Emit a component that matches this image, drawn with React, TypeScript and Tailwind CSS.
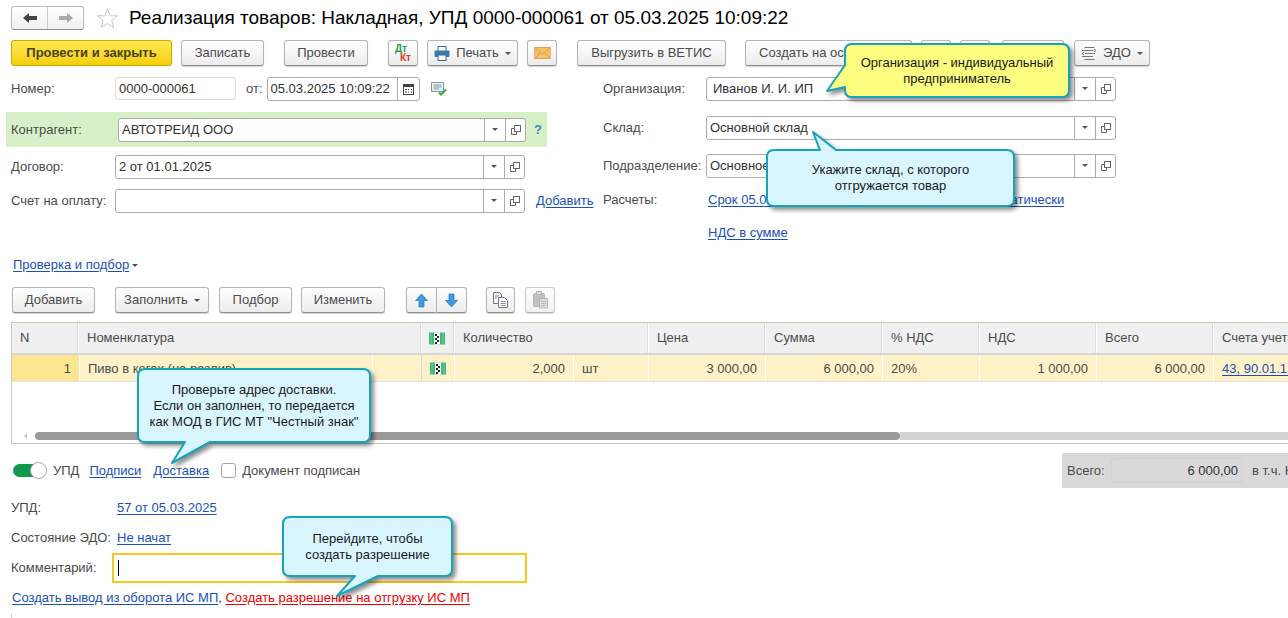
import type { ReactNode } from "react";

const Caret = () => <span className="inline-block w-0 h-0 border-x-[3px] border-x-transparent border-t-[3px] border-t-[#555]" />;

const Btn = ({ className = "", children }: { className?: string; children: ReactNode }) => (
  <div className={`h-[26px] flex items-center justify-center shrink-0 rounded-[3px] border border-[#b5b5b5] border-b-[#8f8f8f] bg-gradient-to-b from-white to-[#ececec] shadow-[0_1px_1px_rgba(0,0,0,0.18)] ${className}`}>
    {children}
  </div>
);

const A = ({ className = "", children }: { className?: string; children: ReactNode }) => (
  <span className={`text-[#1a50b8] underline underline-offset-2 whitespace-nowrap ${className}`}>{children}</span>
);

const OpenIcon = () => (
  <svg width="10" height="10" viewBox="0 0 10 10" fill="none" stroke="#666">
    <rect x="3.500" y="0.500" width="6" height="6" fill="white" />
    <path d="M3.500 3.500H0.500V9.500H5.500V6.500" />
  </svg>
);

const Field = ({ className = "", text = "", textClass = "pl-[3px]" }: { className?: string; text?: string; textClass?: string }) => (
  <div className={`h-[24px] flex shrink-0 rounded-[3px] border border-[#ababab] bg-white ${className}`}>
    <div className={`flex-1 leading-[22px] text-[#333] whitespace-nowrap overflow-hidden ${textClass}`}>{text}</div>
    <div className="w-[21px] border-l border-[#ababab] flex items-center justify-center"><Caret /></div>
    <div className="w-[20px] border-l border-[#ababab] flex items-center justify-center"><OpenIcon /></div>
  </div>
);

const Callout = ({ className, path, fill, children }: { className: string; path: string; fill: string; children: ReactNode }) => (
  <div className={`absolute flex items-center justify-center text-center leading-[16px] text-[#1a1a1a] ${className}`}>
    <svg className="absolute inset-0 w-full h-full overflow-visible drop-shadow-[3px_3px_2px_rgba(0,0,0,0.45)]">
      <path d={path} fill={fill} stroke="#16a3bd" strokeWidth="2" strokeLinejoin="round" />
    </svg>
    <div className="relative">{children}</div>
  </div>
);

const Mark = () => (
  <svg width="16" height="13" viewBox="0 0 16 13">
    <rect x="0" y="0.500" width="16" height="12" fill="#3cb878" />
    <path d="M2 0.500v12M14 0.500v12" stroke="#a5e8c0" strokeDasharray="1 1" />
    <rect x="5" y="0.500" width="6" height="12" fill="white" />
    <path d="M6 2h2v2H6zM8 4h2v2H8zM6 6h2v2H6zM8 8h2v2H8zM6 10h2v2H6z" fill="#222" />
  </svg>
);

const Arrow = ({ up }: { up?: boolean }) => (
  <svg width="13" height="15" viewBox="0 0 13 15" className={up ? "" : "rotate-180"}>
    <path d="M6.500 1L12.500 7.500H9V14H4V7.500H0.500Z" fill="#3f9be0" stroke="#1f78bf" strokeWidth="0.700" />
  </svg>
);

const CopyIcon = () => (
  <svg width="17" height="18" viewBox="0 0 17 18" fill="#f4f4f4" stroke="#6d7a86">
    <path d="M1.500 1.500H7.500L9.500 3.500V12.500H1.500Z" />
    <path d="M3 5H7M3 7H5" strokeWidth="0.800" />
    <path d="M6.500 6.500H12.500L15.500 9.500V16.500H6.500Z" fill="white" />
    <path d="M8.500 10.500H13.500M8.500 12.500H13.500M8.500 14.500H13.500" strokeWidth="0.800" />
  </svg>
);

const PasteIcon = () => (
  <svg width="17" height="18" viewBox="0 0 17 18" fill="#a8a8a8" stroke="#9a9a9a">
    <rect x="1.500" y="2.500" width="11" height="13" rx="1" />
    <rect x="4.500" y="0.500" width="5" height="3" fill="#d0d0d0" />
    <path d="M7.500 7.500H15.500V17H7.500Z" fill="#cfcfcf" />
    <path d="M9 10.500H14M9 12.500H14M9 14.500H14" strokeWidth="0.800" />
  </svg>
);

const HeadCell = ({ className, children }: { className: string; children?: ReactNode }) => (
  <div className={`shrink-0 h-full flex items-center pl-[8px] bg-[#f0f0f0] border-r border-r-[#dcdcdc] mr-px whitespace-nowrap ${className}`}>{children}</div>
);

const RowCell = ({ className, children }: { className: string; children?: ReactNode }) => (
  <div className={`shrink-0 h-full flex items-center px-[8px] pt-px bg-[#fff2c9] mr-px whitespace-nowrap ${className}`}>{children}</div>
);

export default function App() {
  return (
    <div className="relative w-[1288px] h-[618px] overflow-hidden bg-white text-[13px] leading-[14px] text-[#4b4b4b] font-['Liberation_Sans',Arial,sans-serif]">
      {/* header */}
      <div className="flex items-center h-[24px] mt-[6px] ml-[11px]">
        <div className="flex w-[73px] h-[24px] rounded-[3px] border border-[#bdbdbd] border-b-[#8f8f8f] bg-gradient-to-b from-white to-[#f0f0f0]">
          <div className="w-[36px] flex items-center justify-center border-r border-[#c9c9c9]">
            <svg width="14" height="10" viewBox="0 0 14 10"><path d="M0 5L6 0V3H14V7H6V10Z" fill="#444" /></svg>
          </div>
          <div className="flex-1 flex items-center justify-center">
            <svg width="14" height="10" viewBox="0 0 14 10"><path d="M14 5L8 0V3H0V7H8V10Z" fill="#a8a8a8" /></svg>
          </div>
        </div>
        <svg className="ml-[12px]" width="23" height="23" viewBox="0 0 24 24" fill="none" stroke="#c4c4c4"><path d="M12 2L14.800 9.200H22.500L16.400 14L18.600 21.500L12 17.200L5.400 21.500L7.600 14L1.500 9.200H9.200Z" /></svg>
        <div className="ml-[10px] text-[19px] leading-[24px] text-black whitespace-nowrap">Реализация товаров: Накладная, УПД 0000-000061 от 05.03.2025 10:09:22</div>
      </div>

      {/* main toolbar */}
      <div className="flex items-center mt-[10px] ml-[11px]">
        <div className="w-[161px] h-[26px] flex items-center justify-center rounded-[3px] border border-[#c9a800] bg-gradient-to-b from-[#ffe84d] to-[#f5cf00] font-bold text-[#4a4210]">Провести и закрыть</div>
        <Btn className="w-[83px] ml-[9px]">Записать</Btn>
        <Btn className="w-[84px] ml-[20px]">Провести</Btn>
        <Btn className="w-[30px] ml-[20px]">
          <div className="text-[10px] leading-[9px] font-bold">
            <div className="text-[#1e9e4a]">Дт</div>
            <div className="text-[#e8352a] ml-[5px]">Кт</div>
          </div>
        </Btn>
        <Btn className="w-[91px] ml-[9px] gap-[6px]">
          <svg width="16" height="15" viewBox="0 0 16 15">
            <rect x="4" y="0.500" width="8" height="5" fill="white" stroke="#3a6a94" />
            <rect x="0.500" y="4.500" width="15" height="6.500" rx="1" fill="#3a7bb0" />
            <rect x="4" y="9" width="8" height="5.500" fill="white" stroke="#3a6a94" />
          </svg>
          <span>Печать</span>
          <Caret />
        </Btn>
        <Btn className="w-[30px] ml-[9px]">
          <svg width="17" height="12" viewBox="0 0 19 14">
            <rect x="0.500" y="0.500" width="18" height="13" fill="#f5c26b" stroke="#d99a3c" />
            <path d="M1 1L9.500 8L18 1M1 13L7 6M18 13L12 6" fill="none" stroke="#d99a3c" />
          </svg>
        </Btn>
        <Btn className="w-[149px] ml-[20px]">Выгрузить в ВЕТИС</Btn>
        <Btn className="w-[167px] ml-[19px] justify-start pl-[13px]">Создать на основании</Btn>
        <Btn className="w-[30px] ml-[9px]"> </Btn>
        <Btn className="w-[30px] ml-[9px]"> </Btn>
        <Btn className="w-[62px] ml-[12px]"> </Btn>
        <Btn className="w-[76px] ml-[10px] gap-[6px]">
          <svg width="16" height="15" viewBox="0 0 16 15" fill="none" stroke="#777">
            <path d="M3.500 1.500H13.500M1 4.500H12.500M4 7.500H14M1 10.500H12M3.500 13.500H13.500" />
            <path d="M13 3L15 4.500L13 6M3 9L1 7.500L3 6" />
          </svg>
          <span>ЭДО</span>
          <Caret />
        </Btn>
      </div>

      {/* form */}
      <div className="flex mt-[11px] h-[162px]">
        <div className="w-[603px] shrink-0">
          <div className="flex items-center h-[23px]">
            <span className="ml-[11px] w-[104px]">Номер:</span>
            <div className="w-[121px] h-[23px] rounded-[3px] border border-[#dcdcdc] pl-[3px] leading-[21px] text-[#333]">0000-000061</div>
            <span className="ml-[10px]">от:</span>
            <div className="ml-[4px] w-[153px] h-[24px] flex rounded-[3px] border border-[#ababab]">
              <div className="flex-1 pl-[3px] leading-[22px] text-[#333] whitespace-nowrap">05.03.2025 10:09:22</div>
              <div className="w-[22px] border-l border-[#ababab] flex items-center justify-center">
                <svg width="11" height="12" viewBox="0 0 11 12"><rect x="0.500" y="1.500" width="10" height="10" fill="white" stroke="#444" /><rect x="0" y="1" width="11" height="3" fill="#444" /><path d="M2 6h2v1H2zM5 6h1v1H5zM8 6h1v1H8zM2 8.500h2v1H2zM5 8.500h1v1H5zM8 8.500h1v1H8z" fill="#444" /></svg>
              </div>
            </div>
            <svg className="ml-[11px]" width="16" height="14" viewBox="0 0 16 14" fill="none">
              <path d="M0.500 0.500H12.500V9.500H0.500Z" fill="#eef3f6" stroke="#7d97a8" />
              <path d="M2.500 3H10.500M2.500 5H10.500M2.500 7H8" stroke="#7d97a8" />
              <path d="M8 10.500L10 12.500L15 7.500" stroke="#2eae3e" strokeWidth="2" />
            </svg>
          </div>
          <div className="flex items-center ml-[6px] mt-[12px] w-[541px] h-[35px] bg-[#d8f0c8]">
            <span className="ml-[5px] w-[107px]">Контрагент:</span>
            <Field className="w-[408px]" text="АВТОТРЕИД ООО" />
            <span className="ml-[8px] font-bold text-[#1e8fc8]">?</span>
          </div>
          <div className="flex items-center mt-[8px] h-[23px]">
            <span className="ml-[11px] w-[104px]">Договор:</span>
            <Field className="w-[410px]" text="2 от 01.01.2025" />
          </div>
          <div className="flex items-center mt-[11px] h-[23px]">
            <span className="ml-[11px] w-[104px]">Счет на оплату:</span>
            <Field className="w-[410px]" />
            <A className="ml-[11px]">Добавить</A>
          </div>
        </div>
        <div className="flex-1">
          <div className="flex items-center h-[23px]">
            <span className="w-[103px]">Организация:</span>
            <Field className="w-[410px]" text="Иванов И. И. ИП" textClass="pl-[6px]" />
          </div>
          <div className="flex items-center h-[23px] mt-[16px]">
            <span className="w-[103px]">Склад:</span>
            <Field className="w-[410px]" text="Основной склад" />
          </div>
          <div className="flex items-center h-[23px] mt-[15px]">
            <span className="w-[103px]">Подразделение:</span>
            <Field className="w-[410px]" text="Основное подразделение" />
          </div>
          <div className="flex items-center h-[16px] mt-[15px]">
            <span className="w-[105px]">Расчеты:</span>
            <A>Срок 05.03.2025, 62.01, 62.02, зачет аванса автоматически</A>
          </div>
          <div className="ml-[105px] mt-[18px] h-[16px]">
            <A>НДС в сумме</A>
          </div>
        </div>
      </div>

      <div className="flex items-center ml-[13px] mt-[18px] h-[16px] gap-[3px]">
        <A>Проверка и подбор</A>
        <Caret />
      </div>

      {/* table toolbar */}
      <div className="flex items-center ml-[12px] mt-[14px]">
        <Btn className="w-[83px]">Добавить</Btn>
        <Btn className="w-[94px] ml-[20px] gap-[6px]"><span>Заполнить</span><Caret /></Btn>
        <Btn className="w-[73px] ml-[10px]">Подбор</Btn>
        <Btn className="w-[84px] ml-[9px]">Изменить</Btn>
        <div className="flex ml-[21px]">
          <Btn className="w-[31px] rounded-r-none"><Arrow up /></Btn>
          <Btn className="w-[30px] rounded-l-none border-l-0"><Arrow /></Btn>
        </div>
        <Btn className="w-[29px] ml-[19px]"><CopyIcon /></Btn>
        <Btn className="w-[30px] ml-[10px] opacity-70"><PasteIcon /></Btn>
      </div>

      {/* table */}
      <div className="flex flex-col ml-[11px] mt-[9px] h-[122px] border-y border-l border-[#cfc9b5] overflow-hidden">
        <div className="flex h-[30px] shrink-0">
          <HeadCell className="w-[66px]">N</HeadCell>
          <HeadCell className="w-[342px]">Номенклатура</HeadCell>
          <HeadCell className="w-[32px] !pl-[7px]"><Mark /></HeadCell>
          <HeadCell className="w-[193px]">Количество</HeadCell>
          <HeadCell className="w-[116px]">Цена</HeadCell>
          <HeadCell className="w-[116px]">Сумма</HeadCell>
          <HeadCell className="w-[96px]">% НДС</HeadCell>
          <HeadCell className="w-[116px]">НДС</HeadCell>
          <HeadCell className="w-[116px]">Всего</HeadCell>
          <HeadCell className="w-[120px]">Счета учета</HeadCell>
        </div>
        <div className="h-[2px] shrink-0 bg-[#d6d6d6]" />
        <div className="flex h-[26px] shrink-0">
          <RowCell className="w-[67px] justify-end !bg-[#fde591]">1</RowCell>
          <RowCell className="w-[292px]">Пиво в кегах (на разлив)</RowCell>
          <RowCell className="w-[49px] !mr-0 border-r border-[#d6d6d6]" />
          <RowCell className="w-[32px] !px-0 justify-center"><Mark /></RowCell>
          <RowCell className="w-[118px] justify-end">2,000</RowCell>
          <RowCell className="w-[74px]">шт</RowCell>
          <RowCell className="w-[116px] justify-end">3 000,00</RowCell>
          <RowCell className="w-[116px] justify-end">6 000,00</RowCell>
          <RowCell className="w-[96px]">20%</RowCell>
          <RowCell className="w-[116px] justify-end">1 000,00</RowCell>
          <RowCell className="w-[116px] justify-end">6 000,00</RowCell>
          <RowCell className="w-[120px]"><A>43, 90.01.1, 90.02.1</A></RowCell>
        </div>
        <div className="h-px shrink-0 bg-[#e4e4e4]" />
        <div className="flex-1" />
        <div className="flex items-center h-[8px] mb-[3px] shrink-0">
          <div className="w-[23px] flex justify-end pr-[8px]">
            <span className="inline-block w-0 h-0 border-y-[3px] border-y-transparent border-r-[3px] border-r-[#c4c4c4]" />
          </div>
          <div className="w-[865px] h-[8px] rounded-full bg-[#999]" />
          <div className="flex-1 h-[8px] bg-[#d2d2d2]" />
        </div>
      </div>

      {/* bottom */}
      <div className="flex items-start mt-[9px] h-[35px]">
        <div className="flex items-center h-[17px] mt-[9px] ml-[13px]">
          <div className="relative w-[34px] h-[17px]">
            <div className="absolute left-0 top-[2px] w-[26px] h-[13px] rounded-full bg-[#0f9a4e]" />
            <div className="absolute right-0 top-0 w-[17px] h-[17px] rounded-full bg-white border border-[#a5a5a5]" />
          </div>
          <span className="ml-[6px]">УПД</span>
          <A className="ml-[10px]">Подписи</A>
          <A className="ml-[12px]">Доставка</A>
          <div className="ml-[12px] w-[15px] h-[15px] rounded-[3px] border border-[#a5a5a5]" />
          <span className="ml-[6px]">Документ подписан</span>
        </div>
        <div className="ml-auto w-[226px] h-[35px] flex items-center bg-[#d9d9d9] overflow-hidden whitespace-nowrap">
          <span className="ml-[5px] w-[44px] shrink-0">Всего:</span>
          <div className="w-[131px] h-[25px] shrink-0 rounded-[3px] border border-[#d2d2d2] text-right pr-[3px] leading-[23px] text-[#333]">6 000,00</div>
          <span className="ml-[10px]">в т.ч. НДС:</span>
        </div>
      </div>

      <div className="flex items-center ml-[11px] mt-[12px] h-[16px]">
        <span className="w-[106px]">УПД:</span>
        <A>57 от 05.03.2025</A>
      </div>
      <div className="flex items-center ml-[11px] mt-[14px] h-[16px]">
        <span className="w-[106px]">Состояние ЭДО:</span>
        <A>Не начат</A>
      </div>
      <div className="flex items-center ml-[11px] mt-[7px] h-[30px]">
        <span className="w-[101px]">Комментарий:</span>
        <div className="w-[415px] h-[30px] border-2 border-[#f7c71e] flex items-center pl-[4px]">
          <div className="w-px h-[16px] bg-black" />
        </div>
      </div>
      <div className="flex items-center ml-[12px] mt-[7px] h-[16px]">
        <A>Создать вывод из оборота ИС МП</A>
        <span>,&nbsp;</span>
        <A className="!text-[#f00000]">Создать разрешение на отгрузку ИС МП</A>
      </div>
      <div className="ml-[11px] mt-[8px] h-[8px] border-l border-[#cfc9b5]" />

      {/* callouts */}
      <Callout className="left-[845px] top-[44px] w-[224px] h-[53px]" fill="#fdfd80" path="M7 0H217Q224 0 224 7V46Q224 53 217 53H7Q0 53 0 46V43L-18 47L0 21V7Q0 0 7 0Z">
        Организация - индивидуальный<br />предприниматель
      </Callout>
      <Callout className="left-[767px] top-[150px] w-[247px] h-[56px]" fill="#d9f6ff" path="M7 0H53L46 -18L69 0H240Q247 0 247 7V49Q247 56 240 56H7Q0 56 0 49V7Q0 0 7 0Z">
        Укажите склад, с которого<br />отгружается товар
      </Callout>
      <Callout className="left-[138px] top-[369px] w-[232px] h-[73px]" fill="#d9f6ff" path="M7 0H225Q232 0 232 7V66Q232 73 225 73H72L34 94L47 73H7Q0 73 0 66V7Q0 0 7 0Z">
        Проверьте адрес доставки.<br />Если он заполнен, то передается<br />как МОД в ГИС МТ "Честный знак"
      </Callout>
      <Callout className="left-[283px] top-[517px] w-[169px] h-[59px]" fill="#d9f6ff" path="M7 0H162Q169 0 169 7V52Q169 59 162 59H95L54 79L72 59H7Q0 59 0 52V7Q0 0 7 0Z">
        Перейдите, чтобы<br />создать разрешение
      </Callout>
    </div>
  );
}
